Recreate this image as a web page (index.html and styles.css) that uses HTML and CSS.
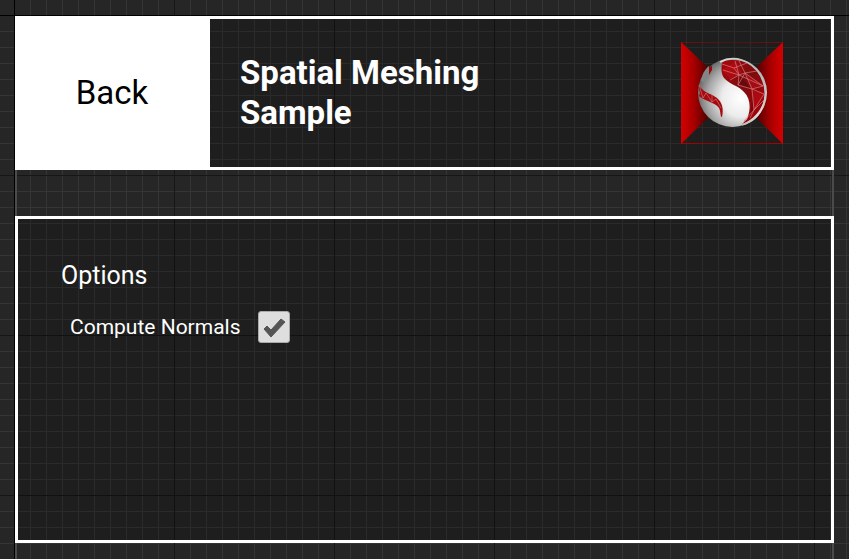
FILE: index.html
```html
<!DOCTYPE html>
<html lang="en">
<head>
<meta charset="utf-8">
<title>Spatial Meshing Sample</title>
<link rel="stylesheet" href="styles.css">
</head>
<body>
<main class="frame">
  <header class="panel header">
    <button class="back" type="button">Back</button>
    <h1 class="title">Spatial Meshing Sample</h1>
    <svg class="logo" viewBox="0 0 102 102" aria-hidden="true">
      <defs>
        <linearGradient id="wingL"><stop offset="0" stop-color="#d40000"/><stop offset=".35" stop-color="#a80000"/><stop offset="1" stop-color="#180000"/></linearGradient>
        <linearGradient id="wingR"><stop offset="0" stop-color="#180000"/><stop offset=".65" stop-color="#a80000"/><stop offset="1" stop-color="#d40000"/></linearGradient>
        <linearGradient id="edge"><stop offset="0" stop-color="#b00000"/><stop offset=".5" stop-color="#5a1414"/><stop offset="1" stop-color="#b00000"/></linearGradient>
        <radialGradient id="ball" cx=".62" cy=".58" r=".68"><stop offset="0" stop-color="#fff"/><stop offset=".4" stop-color="#ececec"/><stop offset=".72" stop-color="#a6a6a6"/><stop offset="1" stop-color="#555"/></radialGradient>
        <linearGradient id="rim" x1="0" y1="1" x2="1" y2="0"><stop offset="0" stop-color="#999"/><stop offset=".5" stop-color="#ddd"/><stop offset="1" stop-color="#aaa"/></linearGradient>
        <linearGradient id="red" x1="0" y1="0" x2="1" y2="1"><stop offset="0" stop-color="#a8080c"/><stop offset=".45" stop-color="#7d0c0e"/><stop offset="1" stop-color="#b00008"/></linearGradient>
      </defs>
      <rect width="102" height="1" fill="url(#edge)" opacity=".6"/>
      <rect y="101" width="102" height="1" fill="url(#edge)"/>
      <path d="M0 0L36 34V67L0 102Z" fill="url(#wingL)"/>
      <path d="M102 0L66 34V67L102 102Z" fill="url(#wingR)"/>
      <circle cx="51.500" cy="50.500" r="34.500" fill="url(#ball)"/>
      <path d="M41 21C43 17 58 17 67 21C78 27 85 38 84 51C84 64 74 78 61 82C65 78 67 77 67 74C70 65 69 56 63 50C58 44 50 43 44 37C40 33 40 27 41 21Z" fill="url(#red)"/>
      <path d="M55 19L61 31L49 37L41 28ZM65 32L82 43L70 48ZM70 48L83 51L73 68Z" fill="#d0101b" opacity=".4"/>
      <path d="M60 34L70 47L56 42ZM72 50L72 68L69 76Z" fill="#5a080b" opacity=".6"/>
      <path d="M42 28L58 33L54 19M41 22L53 26L58 33L49 38M53 26L66 21M58 33L64 31L58 19M64 31L76 29M64 31L82 44L58 33L57 43L64 31L71 47L57 43M71 47L82 44M71 47L83 52L73 68L71 47M73 68L84 57M73 68L63 79M73 68L69 76" fill="none" stroke="#d87a7e" stroke-width=".7"/>
      <path d="M61 83C82 77 90 54 80 34C70 17 52 13 39 20" fill="none" stroke="url(#rim)" stroke-width="1.800"/>
      <path d="M17 43L22 48C25 51 31 52 36 56C41 60 43 67 41 75C39 75 40 70 38 66C34 60 25 60 18 54L19 51Z" fill="#a30b10"/>
      <path d="M18 43L22 56L25 51L31 60L35 57L40 66M31 53V60" fill="none" stroke="#d87a7e" stroke-width=".6"/>
      <path d="M20 39C21 33 23 28 28 24L29 31L24 41Z" fill="#858585"/>
      <path d="M28 25L31 24L31 28L28 33Z" fill="#9a090d"/>
    </svg>
  </header>
  <section class="panel options">
    <h2 class="heading">Options</h2>
    <label class="option">Compute Normals
      <input class="check" type="checkbox" checked>
    </label>
  </section>
</main>
</body>
</html>
```
FILE: styles.css
```css
* {
  box-sizing: border-box;
}

body {
  margin: 0;
  min-height: 100vh;
  display: flex;
  padding: 16px 15px 0;
  color: #fff;
  font-family: Roboto, "Liberation Sans", sans-serif;
  background-color: #262626;
  background-image:
    linear-gradient(#000, #000),
    linear-gradient(#000, #000),
    linear-gradient(90deg, #161616 1px, transparent 1px),
    linear-gradient(#161616 1px, transparent 1px),
    linear-gradient(90deg, #353535 1px, transparent 1px),
    linear-gradient(#353535 1px, transparent 1px);
  background-position: 14px 0, 0 15px, 14px 15px, 14px 15px, 14px 15px, 14px 15px;
  background-size: 1px 100%, 100% 1px, 160px 160px, 160px 160px, 16px 16px, 16px 16px;
  background-repeat: no-repeat, no-repeat, repeat, repeat, repeat, repeat;
}

.frame {
  flex: 1;
  display: flex;
  flex-direction: column;
  gap: 46px;
  padding-bottom: 16px;
  background:
    linear-gradient(#4b4b4b, #4b4b4b) left / 2px 100% no-repeat,
    linear-gradient(#4b4b4b, #4b4b4b) right / 2px 100% no-repeat;
}

.panel {
  border: 3px solid #fff;
  background: rgba(0, 0, 0, 0.2);
}

.header {
  display: flex;
  align-items: center;
  min-height: 154px;
  padding-right: 48px;
}

.back {
  align-self: stretch;
  width: 192px;
  padding: 0 4px 0 0;
  border: 0;
  background: #fff;
  color: #000;
  font: 33px/40px Roboto, "Liberation Sans", sans-serif;
}

.title {
  width: 270px;
  margin: 0 auto 0 30px;
  font-size: 33px;
  line-height: 40px;
  font-weight: 700;
}

.logo {
  width: 102px;
  height: 102px;
}

.options {
  flex: 1;
  padding: 40px 43px;
}

.heading {
  margin: 0 0 18px;
  font-size: 25px;
  line-height: 34px;
  font-weight: 400;
}

.option {
  display: inline-flex;
  align-items: center;
  gap: 17px;
  padding-left: 9px;
  font-size: 21px;
  line-height: 32px;
}

.check {
  appearance: none;
  width: 32px;
  height: 32px;
  margin: 0;
  border: 1px solid #aaa;
  border-radius: 3px;
  background: #dedede;
}

.check:checked {
  background-image: url("data:image/svg+xml,%3Csvg xmlns='http://www.w3.org/2000/svg' viewBox='0 0 30 30'%3E%3Cpath d='M5 17L8 14L12 18L22 7L26 10L12 25Z' fill='%23555' stroke='%23555' stroke-linejoin='round'/%3E%3C/svg%3E");
}
```
